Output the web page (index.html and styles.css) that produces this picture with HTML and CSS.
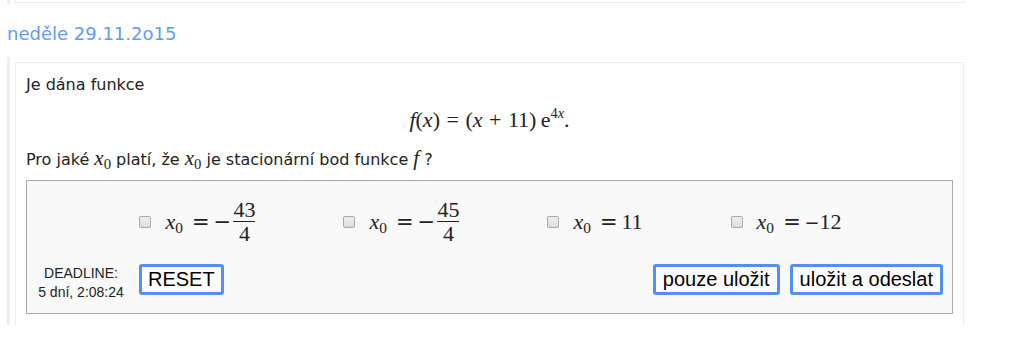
FILE: index.html
```html
<!DOCTYPE html>
<html lang="cs">
<head>
    <meta charset="UTF-8">
    <title>Úlohy</title>
    <link rel="stylesheet" href="styles.css">
</head>
<body>
    <!-- konec predchoziho dne -->
    <div class="day day-prev">
        <div class="card card-tail"></div>
    </div>

    <h2 class="day-title">neděle 29.11.2o15</h2>

    <div class="day day-current">
        <div class="card card-main">
            <p class="intro">Je dána funkce</p>
            <div class="formula">
                <span class="mi">f</span>(<span class="mi">x</span>) <span class="mo">=</span> (<span class="mi">x</span> <span class="mo">+</span> 11)&thinsp;e<sup><span class="num">4</span><span class="mi">x</span></sup>.
            </div>
            <p class="question">Pro jaké <span class="math"><span class="mi">x</span><sub>0</sub></span> platí, že <span class="math"><span class="mi">x</span><sub>0</sub></span> je stacionární bod funkce <span class="math"><span class="mi">f</span></span> ?</p>

            <div class="answers">
                <div class="options">
                    <label class="option">
                        <input type="checkbox">
                        <span class="math"><span class="var"><span class="mi">x</span><sub>0</sub></span><span class="op eq">=</span><span class="op minus">−</span><span class="frac"><span class="numer">43</span><span class="denom">4</span></span></span>
                    </label>
                    <label class="option">
                        <input type="checkbox">
                        <span class="math"><span class="var"><span class="mi">x</span><sub>0</sub></span><span class="op eq">=</span><span class="op minus">−</span><span class="frac"><span class="numer">45</span><span class="denom">4</span></span></span>
                    </label>
                    <label class="option">
                        <input type="checkbox">
                        <span class="math"><span class="var"><span class="mi">x</span><sub>0</sub></span><span class="op eq">=</span><span class="num">11</span></span>
                    </label>
                    <label class="option">
                        <input type="checkbox">
                        <span class="math"><span class="var"><span class="mi">x</span><sub>0</sub></span><span class="op eq">=</span><span class="op neg">−</span><span class="num">12</span></span>
                    </label>
                </div>

                <div class="controls">
                    <div class="deadline">DEADLINE:<br>5 dní, 2:08:24</div>
                    <button class="btn btn-reset">RESET</button>
                    <div class="spacer"></div>
                    <button class="btn">pouze uložit</button>
                    <button class="btn">uložit a odeslat</button>
                </div>
            </div>
        </div>
    </div>
</body>
</html>
```

FILE: styles.css
```css
body {
    margin: 0;
    font-family: "DejaVu Sans", Verdana, sans-serif;
    font-size: 16px;
    color: #222;
    background: #fff;
}
.day {
    margin-left: 7px;
    width: 957px;
    border-left: 3px solid #eee;
    padding-left: 5px;
    box-sizing: border-box;
}
.day-prev {
    height: 4px;
}
.day-current {
    padding-top: 5px;
}
.card {
    border: 1px solid #eee;
    padding: 0 10px 10px 10px;
}
.card-tail {
    border-top: none;
    height: 2px;
    padding: 0;
}
.card-main {
    border-bottom: none;
    padding-bottom: 11px;
}
.day-title {
    margin: 19px 0 12px 7px;
    font-size: 18px;
    font-weight: normal;
    line-height: 22px;
    color: #5f9cf7;
}
.intro {
    margin: 12px 0 0 0;
    line-height: 20px;
}
.formula {
    text-align: center;
    font-family: "Liberation Serif", "Times New Roman", serif;
    font-size: 22px;
    line-height: 30px;
    margin: 10px 0 0 0;
}
.formula sup {
    font-size: 0.65em;
    vertical-align: 0.65em;
    line-height: 0;
}
.question {
    margin: 15px 0 0 0;
    line-height: 20px;
}
.math {
    font-family: "Liberation Serif", "Times New Roman", serif;
    font-size: 21px;
}
.question .math {
    line-height: 0;
}
.mi {
    font-style: italic;
}
.mo {
    padding: 0 1px;
}
.math sub {
    font-size: 0.7em;
    vertical-align: -0.25em;
    line-height: 0;
}
.answers {
    margin-top: 10px;
    border: 1px solid #aaa;
    background: #f9f9f9;
    padding: 16px 9px 11px 0;
}
.options {
    display: flex;
    justify-content: center;
    align-items: center;
    gap: 88px;
    height: 50px;
    margin-left: 11px;
}
.option {
    display: flex;
    align-items: center;
    gap: 14px;
}
.option .math {
    font-size: 22px;
    display: inline-flex;
    align-items: center;
}
.option .var {
    width: 23px;
}
.option .op {
    font-family: "DejaVu Sans", sans-serif;
    font-size: 21px;
    text-align: center;
}
.option .eq {
    width: 25px;
}
.option .minus {
    width: 18px;
    margin-right: 2px;
}
.option .neg {
    font-size: 18px;
    width: 15px;
}
.option input {
    appearance: none;
    -webkit-appearance: none;
    margin: 0;
    width: 12px;
    height: 12px;
    border: 1px solid #aaa;
    border-radius: 2px;
    background: linear-gradient(#eee, #ddd);
    box-sizing: border-box;
}
.frac {
    display: inline-flex;
    flex-direction: column;
    align-items: center;
}
.numer {
    line-height: 22px;
    border-bottom: 1px solid #222;
}
.denom {
    line-height: 24px;
}
.controls {
    display: flex;
    align-items: flex-start;
    margin-top: 17px;
}
.deadline {
    width: 108px;
    text-align: center;
    font-family: "Liberation Sans", Arial, sans-serif;
    font-size: 14px;
    line-height: 19px;
    color: #222;
}
.spacer {
    flex: 1;
}
.btn {
    font-family: "Liberation Sans", Arial, sans-serif;
    font-size: 20px;
    color: #000;
    background: #fff;
    border: 3px solid #5090f8;
    border-radius: 3px;
    height: 31px;
    padding: 0 7px;
    margin-left: 10px;
    line-height: 23px;
}
.btn-reset {
    padding: 0 6px;
    margin-left: 4px;
}
```
